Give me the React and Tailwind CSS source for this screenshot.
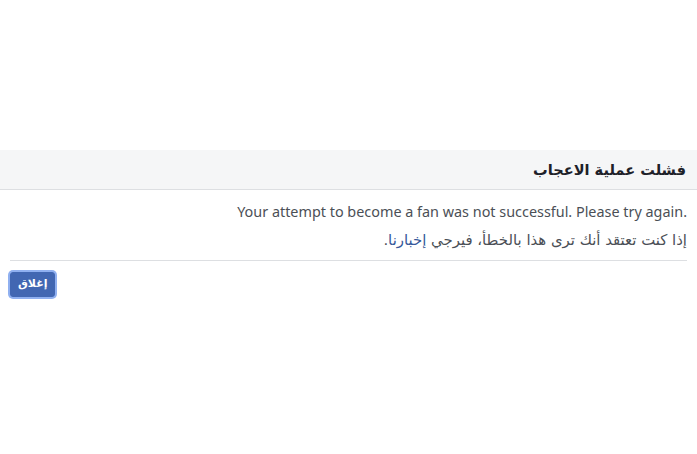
import React from 'react';

const App = () => {
  return (
    <div dir="rtl" className="w-[697px] h-[454px] bg-white" style={{ fontFamily: '"DejaVu Sans", sans-serif' }}>
      <div className="h-[150px]" />
      {/* Dialog header */}
      <div className="h-[40px] bg-[#f5f6f7] border-b border-[#dddfe2] flex items-center pr-[11px]">
        <h2 className="text-[14.6px] font-bold text-[#1d2129]">
          فشلت عملية الاعجاب
        </h2>
      </div>

      {/* Body */}
      <div className="px-[10px] pt-[12px]">
        <p className="text-[14.4px] leading-[20px] text-[#4b4f56]" style={{ fontFamily: '"Noto Sans", sans-serif' }}>
          .Your attempt to become a fan was not successful. Please try again
        </p>
        <p className="mt-[8px] text-[14.9px] leading-[20px] text-[#4b4f56]">
          إذا كنت تعتقد أنك ترى هذا بالخطأ، فيرجي <a href="#" className="text-[#365899]">إخبارنا</a>.
        </p>
        <div className="mt-[10px] border-t border-[#dddfe2]" />
        <div className="pt-[11px] flex justify-end">
          <button className="h-[25px] px-[7px] rounded-[3px] bg-[#4267b2] border border-[#4267b2] text-white text-[11px] font-bold ring-2 ring-[#90b0f0]">
            إغلاق
          </button>
        </div>
      </div>
    </div>
  );
};

export default App;
